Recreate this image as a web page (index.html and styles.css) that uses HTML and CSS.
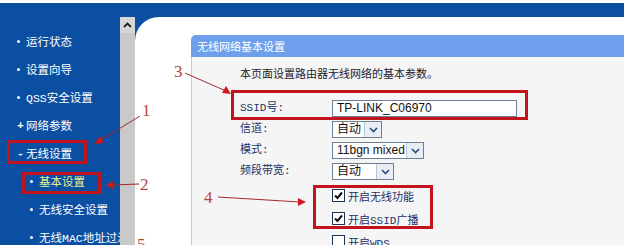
FILE: index.html
```html
<!DOCTYPE html>
<html lang="zh-CN">
<head>
    <meta charset="UTF-8">
    <title>无线网络基本设置</title>
    <link rel="stylesheet" href="styles.css">
</head>
<body>
    <div class="frame">
        <ul class="menu">
            <li><span class="dot"></span>运行状态</li>
            <li><span class="dot"></span>设置向导</li>
            <li><span class="dot"></span>QSS安全设置</li>
            <li><span class="sign">+</span>网络参数</li>
            <li><span class="sign">-</span>无线设置</li>
            <li class="sub active"><span class="dot"></span>基本设置</li>
            <li class="sub"><span class="dot"></span>无线安全设置</li>
            <li class="sub"><span class="dot"></span>无线MAC地址过滤</li>
        </ul>

        <div class="scrollbar">
            <div class="scroll-up">
                <svg width="9" height="6" viewBox="0 0 9 6"><polyline points="1,5 4.5,1.5 8,5" fill="none" stroke="#222" stroke-width="1.8"/></svg>
            </div>
        </div>

        <div class="content">
            <div class="panel">
                <div class="panel-head">无线网络基本设置</div>
                <div class="panel-body">
                    <p class="intro">本页面设置路由器无线网络的基本参数。</p>

                    <div class="form">
                        <label>SSID号:</label>
                        <div class="field"><div class="input">TP-LINK_C06970</div></div>

                        <label>信道:</label>
                        <div class="field">
                            <div class="select w-channel"><span class="value">自动</span><span class="arrow"><svg width="9" height="6" viewBox="0 0 9 6"><polyline points="1,1 4.5,4.5 8,1" fill="none" stroke="#2a4a78" stroke-width="1.6"/></svg></span></div>
                        </div>

                        <label>模式:</label>
                        <div class="field">
                            <div class="select w-mode"><span class="value">11bgn mixed</span><span class="arrow"><svg width="9" height="6" viewBox="0 0 9 6"><polyline points="1,1 4.5,4.5 8,1" fill="none" stroke="#2a4a78" stroke-width="1.6"/></svg></span></div>
                        </div>

                        <label>频段带宽:</label>
                        <div class="field">
                            <div class="select w-band"><span class="value">自动</span><span class="arrow"><svg width="9" height="6" viewBox="0 0 9 6"><polyline points="1,1 4.5,4.5 8,1" fill="none" stroke="#2a4a78" stroke-width="1.6"/></svg></span></div>
                        </div>
                    </div>

                    <div class="checks">
                        <div class="check"><span class="box checked"><svg width="11" height="11" viewBox="0 0 11 11"><polyline points="2,5.5 4.5,8 9,2.5" fill="none" stroke="#111" stroke-width="2"/></svg></span>开启无线功能</div>
                        <div class="check"><span class="box checked"><svg width="11" height="11" viewBox="0 0 11 11"><polyline points="2,5.5 4.5,8 9,2.5" fill="none" stroke="#111" stroke-width="2"/></svg></span>开启SSID广播</div>
                        <div class="check"><span class="box"></span>开启WDS</div>
                    </div>
                </div>
            </div>
        </div>
    </div>

    <!-- annotation overlay: numbered callouts drawn on top of the screenshot -->
    <svg class="notes" width="624" height="245" viewBox="0 0 624 245">
        <g fill="none" stroke="#c2141d" stroke-width="3">
            <rect x="8.5" y="141.5" width="77" height="21"/>
            <rect x="23.5" y="173.5" width="76" height="19"/>
            <rect x="232.5" y="91.5" width="294" height="27"/>
            <rect x="314.5" y="186.5" width="117" height="41"/>
        </g>
        <g stroke="#a8282a" stroke-width="1">
            <line x1="140" y1="116" x2="99" y2="141"/>
            <line x1="139" y1="184" x2="112" y2="185"/>
            <line x1="185" y1="73" x2="226" y2="91"/>
            <line x1="218" y1="197" x2="300" y2="202"/>
        </g>
        <g fill="#d01a1a">
            <polygon points="94,144 100,136 104,143"/>
            <polygon points="106,185 113,181 113,189"/>
            <polygon points="231,94 222,93 226,86"/>
            <polygon points="306,202 298,198 298,206"/>
        </g>
        <g class="num">
            <text x="142" y="116">1</text>
            <text x="140" y="190">2</text>
            <text x="174" y="77">3</text>
            <text x="204" y="203">4</text>
            <text x="137" y="250">5</text>
        </g>
    </svg>
</body>
</html>
```

FILE: styles.css
```css
* {
    margin: 0;
    padding: 0;
    box-sizing: border-box;
}

body {
    width: 624px;
    height: 245px;
    overflow: hidden;
    background: #fff;
    position: relative;
    font-family: "Liberation Mono", "Noto Sans CJK SC", monospace;
    font-size: 11px;
}

.frame {
    margin-top: 3px;
    height: 242px;
    display: flex;
    background: #0b4fa3;
}

/* left menu */
.menu {
    width: 120px;
    flex: none;
    list-style: none;
    padding-top: 24px;
    overflow: hidden;
    white-space: nowrap;
    color: #fff;
    font-size: 11.5px;
}

.menu li {
    height: 28px;
    display: flex;
    align-items: center;
    padding-left: 17px;
}

.menu li.sub {
    padding-left: 30px;
}

.menu li.active {
    color: #e4ee90;
}

.dot {
    width: 3px;
    height: 3px;
    border-radius: 50%;
    background: #fff;
    margin-right: 6px;
    flex: none;
}

.sign {
    width: 9px;
    font-weight: bold;
    flex: none;
}

/* scroll bar between menu and page */
.scrollbar {
    width: 15px;
    flex: none;
    margin-top: 14px;
    background: #c9c9c9;
}

.scroll-up {
    height: 16px;
    background: #d6d6d6;
    display: flex;
    align-items: center;
    justify-content: center;
}

/* main page */
.content {
    flex: 1;
    margin-top: 14px;
    background: #fff;
    border-top-left-radius: 24px;
    padding: 18px 0 0 56px;
    overflow: hidden;
}

.panel {
    height: 100%;
    display: flex;
    flex-direction: column;
}

.panel-head {
    height: 22px;
    line-height: 22px;
    background: #6e9fec;
    border-top-left-radius: 5px;
    color: #fff;
    padding-left: 6px;
    font-family: "Noto Sans CJK SC", sans-serif;
}

.panel-body {
    flex: 1;
    background: #f5f5f5;
    border-left: 1px solid #e3c5a5;
    padding: 9px 0 0 48px;
    color: #1b3365;
}

.intro {
    line-height: 18px;
    color: #1a1a2e;
}

.form {
    margin-top: 16px;
    display: grid;
    grid-template-columns: 92px auto;
    grid-auto-rows: 21px;
}

.form label {
    line-height: 17px;
}

.field {
    display: flex;
}

.input {
    width: 185px;
    height: 17px;
    border: 1px solid #6f7f94;
    background: #fff;
    color: #111;
    font-family: "Liberation Sans", sans-serif;
    font-size: 12px;
    line-height: 15px;
    padding-left: 4px;
}

.select {
    height: 17px;
    border: 1px solid #6f7f94;
    background: #fff;
    display: flex;
    color: #111;
    font-family: "Liberation Sans", "Noto Sans CJK SC", sans-serif;
    font-size: 12px;
    line-height: 15px;
}

.select .value {
    flex: 1;
    padding-left: 4px;
}

.select .arrow {
    width: 17px;
    border-left: 1px solid #b6c4d6;
    background: #e9eef6;
    display: flex;
    align-items: center;
    justify-content: center;
}

.w-channel { width: 50px; }
.w-mode { width: 92px; }
.w-band { width: 62px; }

.checks {
    margin-left: 92px;
}

.check {
    height: 23px;
    display: flex;
    align-items: center;
    color: #1b3365;
}

.box {
    width: 13px;
    height: 13px;
    border: 1px solid #1c3358;
    background: #fff;
    margin-right: 3px;
    display: flex;
    align-items: center;
    justify-content: center;
    flex: none;
}

/* callouts */
.notes {
    position: absolute;
    top: 0;
    left: 0;
    pointer-events: none;
}

.num text {
    font-family: "Liberation Serif", serif;
    font-size: 17px;
    fill: #b5453c;
}
```
